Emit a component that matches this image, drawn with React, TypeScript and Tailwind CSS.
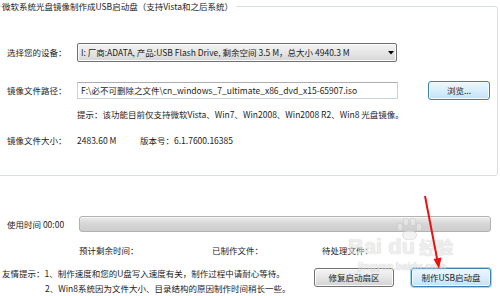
// Win7 style buttons
const grayBtn =
  "h-[19px] w-[80px] rounded-[3px] border border-[#707070] bg-linear-to-b from-[#f6f6f6] via-[#e5e5e5] to-[#d3d3d3] shadow-[inset_0_0_0_1px_#fcfcfc]";
const blueBtn =
  "h-[19px] rounded-[3px] border border-[#3c7fb1] bg-linear-to-b from-[#edf7fd] via-[#d9effc] to-[#bfe3f7] shadow-[inset_0_0_0_1px_#f4fbff]";

const Watermark = () => (
  <div className="pointer-events-none absolute left-[348px] top-[218px] w-[125px] text-[#e4e4e4] opacity-60">
    <svg width="30" height="22" viewBox="0 0 30 22" className="absolute left-[46px] top-0">
      <g fill="#ececec" stroke="#c9c9c9" strokeWidth="1">
        <ellipse cx="6" cy="9" rx="3" ry="4" />
        <ellipse cx="12" cy="4" rx="3" ry="4" />
        <ellipse cx="19" cy="4" rx="3" ry="4" />
        <ellipse cx="25" cy="9" rx="3" ry="4" />
        <ellipse cx="15.5" cy="17" rx="7" ry="5" />
      </g>
    </svg>
    <div className="mt-[18px] flex items-end font-['Liberation_Sans',sans-serif] text-[22px] font-bold leading-[22px] [text-shadow:0_0_1px_#a8a8a8]">
      <span>Bai</span>
      <span className="ml-[6px]">du</span>
      <span className="ml-[4px] font-['Noto_Sans_CJK_SC',sans-serif] text-[17px]">经验</span>
    </div>
    <div className="ml-[10px] mt-[4px] font-['Liberation_Sans',sans-serif] text-[10px] font-bold leading-[10px] [text-shadow:0_0_1px_#a8a8a8]">
      jingyan.baidu.com
    </div>
  </div>
);

const RedArrow = () => (
  <svg className="pointer-events-none absolute left-0 top-0" width="500" height="296">
    <line x1="425" y1="196" x2="437.5" y2="261" stroke="#ee1111" strokeWidth="2" />
    <polygon points="439,269 433.5,259 441.5,257.5" fill="#ee1111" />
  </svg>
);

export default function App() {
  return (
    <div className="relative h-[296px] w-[500px] overflow-hidden bg-white font-['Noto_Sans_CJK_SC',sans-serif] text-[8.5px] text-[#1c1c1c]">
      <fieldset className="-ml-[3px] h-[176px] w-[501px] rounded-[3px] border border-[#d5dfe5] pl-[4px]">
        <legend className="pr-[3px] leading-[12px]">微软系统光盘镜像制作成USB启动盘（支持Vista和之后系统）</legend>

        <div className="flex flex-col pl-[5px]">
          <div className="mt-[31px] flex h-[19px] items-center">
            <span className="w-[70px]">选择您的设备：</span>
            <div className="flex h-[19px] w-[320px] items-center justify-between rounded-[2px] border border-[#707070] bg-linear-to-b from-[#f4f4f4] via-[#e6e6e6] to-[#d6d6d6] pl-[3px] pr-[2px] shadow-[inset_0_0_0_1px_#fafafa]">
              <span>I: 厂商:ADATA, 产品:USB Flash Drive, 剩余空间 3.5 M，总大小 4940.3 M</span>
              <svg width="6" height="4" viewBox="0 0 6 4">
                <polygon points="0,0 6,0 3,3.5" fill="#000" />
              </svg>
            </div>
          </div>

          <div className="mt-[20px] flex h-[17px] items-center">
            <span className="w-[70px]">镜像文件路径：</span>
            <div className="flex h-[17px] w-[321px] items-center border border-[#c5d3e0] border-t-[#abadb3] bg-white pl-[3px]">
              F:\必不可删除之文件\cn_windows_7_ultimate_x86_dvd_x15-65907.iso
            </div>
            <button className={`${blueBtn} ml-[30px] h-[17px] w-[62px]`}>浏览...</button>
          </div>

          <div className="ml-[70px] mt-[9px] leading-[12px]">
            提示：该功能目前仅支持微软Vista、Win7、Win2008、Win2008 R2、Win8 光盘镜像。
          </div>

          <div className="mt-[14px] flex leading-[12px]">
            <span className="w-[70px]">镜像文件大小：</span>
            <span className="w-[63px]">2483.60 M</span>
            <span>版本号：6.1.7600.16385</span>
          </div>
        </div>
      </fieldset>

      <div className="mt-[40px] flex h-[16px] items-center">
        <span className="w-[79px] pl-[7px]">使用时间 00:00</span>
        <div className="h-[16px] w-[412px] rounded-[3px] border border-[#b2b2b2] bg-linear-to-b from-[#ececec] via-[#d6d6d6] to-[#cdcdcd] shadow-[inset_0_1px_0_#f7f7f7]" />
      </div>

      <div className="mt-[12px] flex leading-[12px]">
        <span className="ml-[79px] w-[133px]">预计剩余时间：</span>
        <span className="w-[110px]">已制作文件：</span>
        <span>待处理文件：</span>
      </div>

      <div className="mt-[10px] flex items-start pr-[9px]">
        <div className="flex-1 pl-[2px] leading-[15px]">
          <div>友情提示：1、制作速度和您的U盘写入速度有关，制作过程中请耐心等待。</div>
          <div className="pl-[43px]">2、Win8系统因为文件大小、目录结构的原因制作时间稍长一些。</div>
        </div>
        <div className="mt-[2px] flex gap-[17px]">
          <button className={grayBtn}>修复启动扇区</button>
          <button className={`${blueBtn} w-[80px] ring-1 ring-[#9fd6f5]`}>制作USB启动盘</button>
        </div>
      </div>

      <Watermark />
      <RedArrow />
    </div>
  );
}
